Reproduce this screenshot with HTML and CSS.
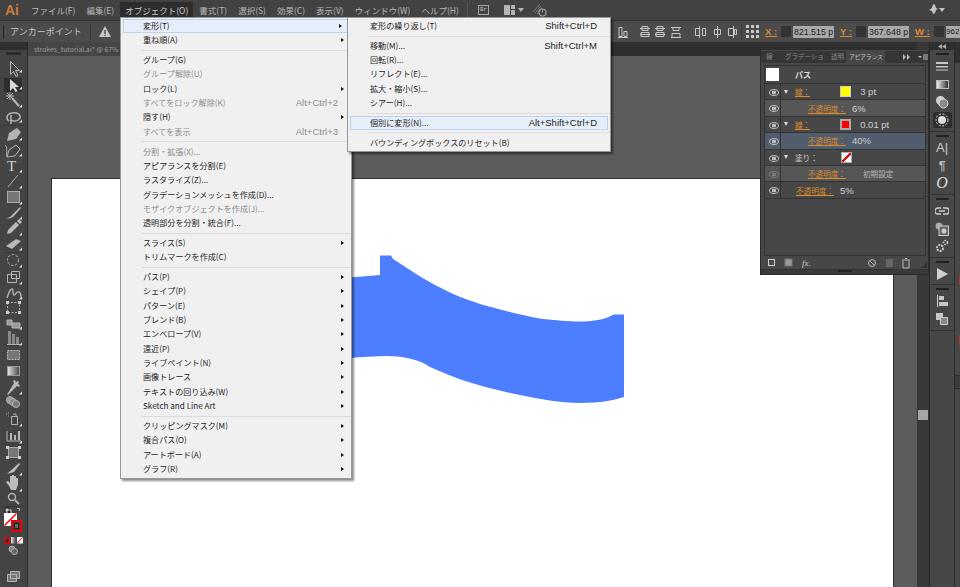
FILE: index.html
```html
<!DOCTYPE html>
<html lang="ja">
<head>
    <meta charset="UTF-8">
    <title>Illustrator</title>
    <link rel="stylesheet" href="styles.css">
</head>
<body>
<div class="app">
    <div class="menubar">
        <span class="logo">Ai</span>
        <span class="mitem">ファイル(F)</span>
        <span class="mitem">編集(E)</span>
        <span class="mitem active">オブジェクト(O)</span>
        <span class="mitem">書式(T)</span>
        <span class="mitem">選択(S)</span>
        <span class="mitem">効果(C)</span>
        <span class="mitem">表示(V)</span>
        <span class="mitem">ウィンドウ(W)</span>
        <span class="mitem">ヘルプ(H)</span>
        <span class="mb-sep"></span>
        <span class="br-icon">Br</span>
        <svg class="mb-icon" width="22" height="12" viewBox="0 0 22 12"><path d="M0 1h6v10H0zM7 1h4v4H7zM7 6h4v5H7z" fill="#b4b4b4"/><path d="M14 4h6l-3 4z" fill="#b4b4b4"/></svg>
        <svg class="mb-icon sync" width="14" height="14" viewBox="0 0 14 14"><path d="M0 9L7 1M2 10l6-7M4 11l5-6" stroke="#7a7a7a"/><circle cx="9.500" cy="9.500" r="3.500" fill="none" stroke="#a0a0a0" stroke-width="1.200"/><path d="M9.500 6.500v3" stroke="#a0a0a0"/></svg>
        <span class="mb-right">
            <svg width="16" height="12" viewBox="0 0 16 12"><path d="M4 0l2 1 1 3 2 1-2 1-1 3-2 1-1-3-3-1 3-2zM10 4h6l-3 4z" fill="#c4c4c4"/></svg>
        </span>
    </div>

    <div class="controlbar">
        <span class="grip"></span>
        <span class="cb-title">アンカーポイント</span>
        <span class="cb-sep"></span>
        <svg class="warn" width="12" height="11" viewBox="0 0 12 11"><path d="M6 0l6 11H0z" fill="#c8c8c8"/><path d="M5.400 4h1.200v4H5.400zM5.400 8.800h1.200V10H5.400z" fill="#333"/></svg>
        <span class="cb-spacer"></span>
        <svg class="align-icons" width="120" height="14" viewBox="0 0 120 14" fill="none" stroke="#c8c8c8">
            <path d="M1 2.500h3v9H1zM6 6.500h3v5H6zM0 12.500h10"/>
            <path d="M22 3.500h10M24 1.500h6v4h-6zM22 9.500h10M23 7.500h8v4h-8z"/>
            <path d="M37 3.500h10M39 1.500h6v4h-6zM37 9.500h10M38 7.500h8v4h-8z"/>
            <path d="M53 2.500h10M55 2.500h6v3h-6zM53 12.500h10M54 8.500h8v4h-8z"/>
            <path d="M81.500 1v12M77.500 3.500h4v7h-4zM84.500 3.500h3v7h-3z"/>
            <path d="M99.500 1v12M96.500 4.500h6v5h-6z"/>
            <path d="M115.500 1v12M110.500 3.500h5v7h-5zM116.500 4.500h2v5h-2z"/>
        </svg>
        <span class="cb-sep second"></span>
        <svg class="ref-point" width="13" height="13" viewBox="0 0 13 13" fill="#c8c8c8"><path d="M0 0h3v3H0zM5 0h3v3H5zM10 0h3v3h-3zM0 5h3v3H0zM5 5h3v3H5zM10 5h3v3h-3zM0 10h3v3H0zM5 10h3v3H5zM10 10h3v3h-3z"/></svg>
        <span class="coord-label">X :</span>
        <span class="spin"></span><span class="coord-val">821.515 p</span>
        <span class="coord-label">Y :</span>
        <span class="spin"></span><span class="coord-val">367.648 p</span>
        <span class="coord-label wide">W :</span>
        <span class="spin"></span><span class="coord-val last">962</span>
    </div>

    <div class="main">
        <div class="toolbar">
            <div class="tb-top"></div>
            <svg class="tools" width="27" height="537" viewBox="0 50 27 537" fill="none" stroke="#b4b4b4">
                <defs>
                    <linearGradient id="gr" x1="0" x2="1" y1="0" y2="0"><stop offset="0" stop-color="#e8e8e8"/><stop offset="1" stop-color="#444"/></linearGradient>
                </defs>
                <path d="M6 53.500h15" stroke="#222" stroke-width="2"/>
                <path d="M3 125.500h21M3 252.500h21M3 345.500h21M3 444.500h21M3 506.500h21" stroke="#393939"/>
                <!-- selection, direct selection, wand, lasso -->
                <path d="M10.500 61.500v13l3-3 2.500 5 2-1-2.500-5h4z"/>
                <rect x="4" y="78" width="18" height="14" fill="#2e2e2e" stroke="none"/>
                <path d="M10 79v12l3-3 2.500 4 2-1-2.500-4h4z" fill="#d8d8d8" stroke="none"/>
                <path d="M12 98l7 8" stroke-width="2"/>
                <path d="M6 96h8M10 92v8M7 93l6 6M13 93l-6 6" stroke-width="1"/>
                <path d="M9 121c-3-2-3-7 3-8 6-1 9 2 8 5-1 3-6 4-10 2M11 115v9" stroke-width="1.500"/>
                <!-- pen, curvature, type, line -->
                <path d="M7 141l2-8 8-5 4 4-5 7z" fill="#b4b4b4" stroke="none"/>
                <path d="M7 157l2-7 7-5 4 4-5 7zM5 145c3 2 1 8 2 12"/>
                <text x="7" y="171" class="tool-t">T</text>
                <path d="M8 187l10-12"/>
                <!-- rect, brush, pencil, eraser -->
                <rect x="7.500" y="191.500" width="12" height="11" fill="#777" stroke="#aaa"/>
                <path d="M6 218c4 0 5-2 7-4l7-7 1 1-7 8c-2 2-5 3-8 2z" fill="#b8b8b8" stroke="none"/>
                <path d="M7 234l1-4 8-8 3 3-8 8zM17 221l2-2 3 3-2 2z" fill="#bbb" stroke="none"/>
                <path d="M6 246l10-7 5 2-9 8z" fill="#b8b8b8" stroke="none"/>
                <!-- rotate, scale, warp, free transform -->
                <circle cx="13" cy="260" r="5.500" stroke-dasharray="2.500 1.500"/>
                <path d="M7.500 274.500h9v8h-9zM11.500 271.500h8v7h-8z"/>
                <path d="M7 298c2-6 3-9 5-9s0 6 2 6 2-4 5-3 1 5 3 7" stroke-width="1.400"/>
                <path d="M7.500 302.500h12v10h-12z" stroke-dasharray="2 1.500"/>
                <path d="M6 301h3v3H6zM18 301h3v3h-3zM6 311h3v3H6zM18 311h3v3h-3z" fill="#ccc" stroke="none"/>
                <!-- shape builder, perspective, mesh, gradient -->
                <path d="M7 320h5v5H7zM12 323h8v5h-8z" fill="#999"/>
                <path d="M8 331h3v13H8zM12 334h3v10h-3zM16 337h3v7h-3z" fill="#888" stroke="none"/>
                <path d="M7 344.500h13" />
                <rect x="7.500" y="350.500" width="12" height="9" fill="#777" stroke="#bbb" stroke-dasharray="2 1"/>
                <rect x="7.500" y="366.500" width="12" height="9" fill="url(#gr)" stroke="#999"/>
                <!-- eyedropper, blend, spray, graph -->
                <path d="M8 393l-1 1 1 1 1-1 8-8 2 1 1-2-2-1 1-2-1-1-2 1-1-2-2 1 1 2z" fill="#b8b8b8" stroke="none"/>
                <circle cx="10" cy="400" r="3.500" fill="#999"/><circle cx="13" cy="402" r="3.500" fill="#888"/><circle cx="16" cy="404" r="3.500" fill="#777"/>
                <path d="M11.500 416.500h6v8h-6zM13 414h3v2M8 413h1M8 416h1M6 414h1" />
                <path d="M7 431v10h14" /><path d="M10 433h2v7h-2zM14 435h2v5h-2zM18 431h2v9h-2z" fill="#b8b8b8" stroke="none"/>
                <!-- artboard, slice, hand, zoom -->
                <rect x="8.500" y="447.500" width="10" height="10" fill="#777" stroke="#aaa"/>
                <path d="M6 446h3v3H6zM18 446h3v3h-3zM6 456h3v3H6zM18 456h3v3h-3z" fill="#ccc" stroke="none"/>
                <path d="M7 474l12-11 1 1-6 8z" fill="#bbb" stroke="none"/>
                <path d="M9 486l-3-4 2-1 2 2v-7h2v5-6h2v6-5h2v6-4h2v7l-2 5h-5z" fill="#bbb" stroke="none"/>
                <circle cx="12" cy="497" r="3.500" stroke-width="1.400"/><path d="M15 500l4 4" stroke-width="2"/>
                <!-- fill, stroke, modes -->
                <path d="M22 72.500v-3l-3 3zM22 89.500v-3l-3 3zM22 107.500v-3l-3 3zM22 122.500v-3l-3 3zM22 140.500v-3l-3 3zM22 156.500v-3l-3 3zM22 172.500v-3l-3 3zM22 188.500v-3l-3 3zM22 204.500v-3l-3 3zM22 219.500v-3l-3 3zM22 235.500v-3l-3 3zM22 250.500v-3l-3 3zM22 267.500v-3l-3 3zM22 284.500v-3l-3 3zM22 299.500v-3l-3 3zM22 329.500v-3l-3 3zM22 345.500v-3l-3 3zM22 394.500v-3l-3 3zM22 426.500v-3l-3 3zM22 443.500v-3l-3 3zM22 475.500v-3l-3 3zM22 491.500v-3l-3 3z" fill="#ddd" stroke="none"/>
                <path d="M5 508h4v4H5z" fill="#ccc" stroke="#111"/><path d="M7 510h4v4H7z" fill="#222" stroke="#ddd"/>
                <path d="M17 508l3 1-1 2" stroke="#bbb"/>
                <rect x="4" y="513" width="13" height="13" fill="#fff" stroke="none"/>
                <path d="M4.500 525.500l12-12" stroke="#e00" stroke-width="1.500"/>
                <rect x="11" y="520" width="11" height="12" fill="#fff" stroke="none"/>
                <rect x="12" y="521" width="9" height="10" fill="#3d3d3d" stroke="#e00" stroke-width="2"/>
                <rect x="14.500" y="523.500" width="4" height="5" fill="#666" stroke="#222"/>
                <rect x="5" y="538" width="4.500" height="5" fill="#333" stroke="#e00" stroke-width="1.400"/>
                <rect x="11" y="537" width="5" height="6.500" fill="url(#gr)" stroke="none"/>
                <rect x="17" y="537" width="6" height="6.500" fill="#fff" stroke="none"/>
                <path d="M17.500 543l5-5.500" stroke="#e00"/>
                <circle cx="12" cy="549" r="3" fill="#888"/><circle cx="14.500" cy="551.500" r="3" fill="#666"/>
                <path d="M7.500 574.500h9v7h-9zM10.500 571.500h9v7h-9z" fill="#777"/>
            </svg>
        </div>
        <div class="workspace">
            <div class="tabbar"><span class="doctab">strokes_tutorial.ai* @ 67%</span></div>
            <div class="canvas">
                <div class="artboard">
                    <svg class="shape" width="280" height="160" viewBox="350 250 280 160">
                        <path d="M350 277.500L380 275V255.500H391L393 259C410 270 425 280 437 286C452 294 465 299 480 304C505 311 525 316 540 318.500C555 320.500 570 321.500 580 321.500C590 321.500 600 320 606 318C610 316.500 612 315 614 314.500H624V397C615 400 600 403 580 403C560 403 540 399 520 395C500 391 480 386 462 380C450 376 440 371 430 367C420 360 405 356 387 356C375 356 362 357 350 358Z" fill="#4d7eff"/>
                    </svg>
                </div>
            </div>
        </div>
        <div class="scrollbar"><span class="thumb-v"></span></div>
        <div class="dock">
            <div class="dock-top"><svg width="8" height="5" viewBox="0 0 8 5"><path d="M4 0v5L0 2.500zM8 0v5L4 2.500z" fill="#aaa"/></svg></div>
            <div class="dock-group g1">
                <span class="dock-grip"></span>
                <span class="cell"><svg width="14" height="11" viewBox="0 0 14 11"><path d="M1 1h12v2H1zM1 5h12v1.500H1zM1 8.500h12v1H1z" fill="#c8c8c8"/></svg></span>
                <span class="cell"><span class="dock-grad"></span></span>
                <span class="cell"><svg width="14" height="14" viewBox="0 0 14 14"><circle cx="5.500" cy="5.500" r="4.500" fill="#d0d0d0"/><circle cx="8.500" cy="8.500" r="4.500" fill="#8a8a8a" stroke="#ddd"/></svg></span>
                <span class="cell"><span class="dock-sel"><svg width="14" height="14" viewBox="0 0 14 14"><circle cx="7" cy="7" r="4" fill="#ddd"/><circle cx="7" cy="7" r="6" fill="none" stroke="#ddd" stroke-dasharray="2 1.500"/></svg></span></span>
            </div>
            <div class="dock-group g2">
                <span class="dock-grip"></span>
                <span class="cell dock-a">A|</span>
                <span class="cell dock-p">¶</span>
                <span class="cell dock-o">O</span>
            </div>
            <div class="dock-group g2">
                <span class="dock-grip"></span>
                <span class="cell"><svg width="14" height="8" viewBox="0 0 14 8"><path d="M6 1H3a3 3 0 0 0 0 6h3M8 1h3a3 3 0 0 1 0 6H8M4 4h6" fill="none" stroke="#d0d0d0" stroke-width="1.300"/></svg></span>
                <span class="cell"><svg width="14" height="14" viewBox="0 0 14 14"><circle cx="4" cy="4" r="3.500" fill="#aaa"/><rect x="4" y="4" width="9.500" height="9.500" fill="#666" stroke="#ccc"/><circle cx="9" cy="9" r="2.500" fill="#ccc"/></svg></span>
                <span class="cell"><svg width="14" height="14" viewBox="0 0 14 14"><circle cx="5" cy="9" r="3" fill="none" stroke="#c8c8c8" stroke-width="2" stroke-dasharray="2 1"/><circle cx="10.500" cy="3.500" r="2" fill="none" stroke="#c8c8c8" stroke-width="1.500" stroke-dasharray="1.500 1"/></svg></span>
            </div>
            <div class="dock-group g4">
                <span class="dock-grip"></span>
                <span class="cell"><svg width="12" height="12" viewBox="0 0 12 12"><path d="M1 0l11 6-11 6z" fill="#d0d0d0"/></svg></span>
            </div>
            <div class="dock-group g5">
                <span class="dock-grip"></span>
                <span class="cell"><svg width="11" height="12" viewBox="0 0 11 12"><path d="M.5 0v12" stroke="#ccc"/><path d="M2 1h5v4H2zM2 7h9v4H2z" fill="#c8c8c8"/></svg></span>
                <span class="cell"><svg width="12" height="12" viewBox="0 0 12 12"><path d="M0 0h7v7H0z" fill="#c8c8c8"/><path d="M4.500 4.500h7v7h-7z" fill="#888" stroke="#ccc"/></svg></span>
            </div>
        </div>
        <div class="dock2">
            <span class="d2-a"></span><span class="d2-b"></span><span class="d2-b second"></span><span class="d2-sep"></span>
        </div>
    </div>

    <div class="menu obj-menu">
        <div class="row hl sub"><span>変形(T)</span></div>
        <div class="row sub"><span>重ね順(A)</span></div>
        <hr>
        <div class="row"><span>グループ(G)</span></div>
        <div class="row off"><span>グループ解除(U)</span></div>
        <div class="row sub"><span>ロック(L)</span></div>
        <div class="row off"><span>すべてをロック解除(K)</span><em>Alt+Ctrl+2</em></div>
        <div class="row sub"><span>隠す(H)</span></div>
        <div class="row off"><span>すべてを表示</span><em>Alt+Ctrl+3</em></div>
        <hr>
        <div class="row off"><span>分割・拡張(X)...</span></div>
        <div class="row"><span>アピアランスを分割(E)</span></div>
        <div class="row"><span>ラスタライズ(Z)...</span></div>
        <div class="row"><span>グラデーションメッシュを作成(D)...</span></div>
        <div class="row off"><span>モザイクオブジェクトを作成(J)...</span></div>
        <div class="row"><span>透明部分を分割・統合(F)...</span></div>
        <hr>
        <div class="row sub"><span>スライス(S)</span></div>
        <div class="row"><span>トリムマークを作成(C)</span></div>
        <hr>
        <div class="row sub"><span>パス(P)</span></div>
        <div class="row sub"><span>シェイプ(P)</span></div>
        <div class="row sub"><span>パターン(E)</span></div>
        <div class="row sub"><span>ブレンド(B)</span></div>
        <div class="row sub"><span>エンベロープ(V)</span></div>
        <div class="row sub"><span>遠近(P)</span></div>
        <div class="row sub"><span>ライブペイント(N)</span></div>
        <div class="row sub"><span>画像トレース</span></div>
        <div class="row sub"><span>テキストの回り込み(W)</span></div>
        <div class="row sub"><span>Sketch and Line Art</span></div>
        <hr>
        <div class="row sub"><span>クリッピングマスク(M)</span></div>
        <div class="row sub"><span>複合パス(O)</span></div>
        <div class="row sub"><span>アートボード(A)</span></div>
        <div class="row sub"><span>グラフ(R)</span></div>
    </div>

    <div class="menu trans-menu">
        <div class="row"><span>変形の繰り返し(T)</span><em>Shift+Ctrl+D</em></div>
        <hr>
        <div class="row"><span>移動(M)...</span><em>Shift+Ctrl+M</em></div>
        <div class="row"><span>回転(R)...</span></div>
        <div class="row"><span>リフレクト(E)...</span></div>
        <div class="row"><span>拡大・縮小(S)...</span></div>
        <div class="row"><span>シアー(H)...</span></div>
        <hr>
        <div class="row hl"><span>個別に変形(N)...</span><em>Alt+Shift+Ctrl+D</em></div>
        <hr>
        <div class="row"><span>バウンディングボックスのリセット(B)</span></div>
    </div>

    <div class="panel">
        <div class="ptabs">
            <span class="ptab t1">線</span>
            <span class="ptab t2">グラデーショ</span>
            <span class="ptab t3">透明</span>
            <span class="ptab on">アピアランス</span>
            <svg class="pmenu" width="27" height="8" viewBox="0 0 27 8"><path d="M1 1v6l3-3zM5 1v6l3-3z" fill="#bbb"/><path d="M12.500 0v8" stroke="#333"/><path d="M16 3h4l-2 2z" fill="#bbb"/><path d="M21 1h5v6h-5z" fill="#777"/></svg>
        </div>
        <div class="pbody">
            <div class="phead"><span class="thumb"></span><b>パス</b></div>
            <div class="prow"><span class="eye"></span><span class="tri"></span><u>線：</u><span class="swatch yellow"></span><span class="val">3 pt</span></div>
            <div class="prow lite"><span class="eye"></span><u class="ind">不透明度：</u><span class="val">6%</span></div>
            <div class="prow"><span class="eye"></span><span class="tri"></span><u>線：</u><span class="swatch red"></span><span class="val">0.01 pt</span></div>
            <div class="prow sel"><span class="eye"></span><u class="ind">不透明度：</u><span class="val">40%</span></div>
            <div class="prow"><span class="eye"></span><span class="tri"></span><span class="nu">塗り：</span><span class="swatch none"></span></div>
            <div class="prow lite"><span class="eye dim"></span><u class="ind deep">不透明度：</u><span class="val2">初期設定</span></div>
            <div class="prow"><span class="eye"></span><u class="ind top">不透明度：</u><span class="val">5%</span></div>
            <div class="pempty"></div>
        </div>
        <div class="pfoot">
            <svg width="40" height="12" viewBox="0 0 40 12" fill="none" stroke="#d0d0d0">
                <rect x="7.500" y="2.500" width="6" height="6"/>
                <rect x="24" y="2" width="7" height="7" fill="#999" stroke="#777"/>
            </svg>
            <span class="fx">fx.</span>
            <svg class="foot-r" width="60" height="12" viewBox="0 0 60 12" fill="none" stroke="#b8b8b8">
                <circle cx="4" cy="6" r="3.500"/><path d="M1.500 3.500l5 5"/>
                <path d="M18 2h7v8h-7z" fill="#666" stroke="none"/>
                <path d="M34 3h8M35 4v7h6V4M37 1.500h2" />
                <path d="M59 5v6h-6z" fill="#333" stroke="none"/>
            </svg>
        </div>
        <div class="pgrip"><span></span></div>
    </div>
</div>
</body>
</html>
```

FILE: styles.css
```css
* { box-sizing: border-box; }
html, body { margin: 0; height: 100%; overflow: hidden; }
body {
    font-family: "Noto Sans CJK JP", "Liberation Sans", sans-serif;
    font-size: 9px;
    background: #3a3a3a;
    color: #ccc;
}
.app { position: relative; width: 960px; height: 587px; overflow: hidden; display: flex; flex-direction: column; }

/* menu bar */
.menubar { height: 20px; background: #424242; display: flex; align-items: center; padding-left: 5px; flex: none; }
.logo { color: #d07a3a; font: bold 14px "Liberation Sans", sans-serif; width: 21px; flex: none; }
.mitem { padding: 0 5px; height: 16px; line-height: 16px; margin-right: 1px; color: #b8b8b8; font-size: 8.500px; white-space: nowrap; flex: none; }
.mitem.active { background: #2d2d2d; color: #ccc; }
.mb-sep { width: 1px; height: 14px; background: #555; margin: 0 10px 0 2px; flex: none; }
.br-icon { border: 1px solid #a8a8a8; font: 6px/8px "Liberation Mono", monospace; padding: 0 1px; color: #bbb; margin-right: 15px; flex: none; }
.mb-icon { flex: none; }
.mb-icon.sync { margin-left: 7px; }
.mb-right { margin-left: auto; margin-right: 15px; display: flex; }

/* control bar */
.controlbar { height: 22px; background: #4b4b4b; border-top: 1px solid #333; display: flex; align-items: center; padding-left: 3px; white-space: nowrap; flex: none; }
.controlbar > * { flex: none; }
.grip { width: 1px; height: 14px; background: #222; margin-right: 6px; }
.cb-title { width: 80px; color: #c8c8c8; }
.cb-sep { width: 1px; height: 16px; background: #3a3a3a; margin-right: 8px; }
.cb-sep.second { margin: 0 4px 0 3px; }
.cb-spacer { width: 507px; }
.ref-point { margin-right: 6px; }
.coord-label { color: #d98a2b; text-decoration: underline; font: bold 9.500px "Liberation Sans", sans-serif; width: 11px; margin-right: 5px; }
.coord-label.wide { width: 13px; margin-right: 6px; }
.spin { width: 10px; height: 11px; background: #333; margin-right: 2px; }
.coord-val { background: #a8a8a8; color: #222; font: 8.800px/12px "Liberation Sans", sans-serif; width: 41px; height: 12px; overflow: hidden; margin-right: 6px; padding-left: 1px; }
.coord-val.last { margin-right: 0; width: 14px; padding-left: 0; font-size: 8px; }

/* main area */
.main { flex: 1; display: flex; min-height: 0; }
.toolbar { width: 28px; background: #444; border-right: 1px solid #2a2a2a; flex: none; }
.tb-top { height: 8px; background: #2f2f2f; }
.tools { display: block; }
.tool-t { font: 15px "Liberation Serif", serif; fill: #ccc; stroke: none; }
.workspace { width: 889px; display: flex; flex-direction: column; flex: none; }
.tabbar { height: 14px; background: #2f2f2f; flex: none; }
.doctab { display: block; width: 92px; height: 14px; padding-left: 6px; background: #454545; color: #9d9d9d; line-height: 14px; font-size: 6.800px; white-space: nowrap; overflow: hidden; }
.canvas { flex: 1; background: #5c5c5c; padding: 123px 0 0 24px; min-height: 0; }
.artboard { background: #fff; width: 841px; height: 420px; position: relative; outline: 1px solid #2e2e2e; }
.shape { position: absolute; left: 298px; top: 71px; }
.scrollbar { width: 13px; background: #383838; padding: 368px 0 0 1px; flex: none; border-right: 1px solid #2a2a2a; }
.thumb-v { display: block; width: 10px; height: 10px; background: #a6a6a6; }

/* icon docks */
.dock { width: 25px; background: #474747; flex: none; border-right: 1px solid #2a2a2a; display: flex; flex-direction: column; }
.dock-top { height: 8px; background: #2f2f2f; display: flex; align-items: center; justify-content: center; }
.dock-top svg { display: block; }
.dock-group { display: flex; flex-direction: column; align-items: center; padding: 3px 0 2px; border-bottom: 1px solid #333; flex: none; }
.g1 { height: 82px; }
.g2 { height: 63px; }
.g4 { height: 27px; }
.g5 { height: 46px; }
.dock-grip { width: 13px; height: 2px; background: #222; margin-bottom: 2px; flex: none; }
.cell { flex: 1; display: flex; align-items: center; justify-content: center; min-height: 0; }
.dock-grad { width: 13px; height: 9px; background: linear-gradient(to right, #eee, #333); border: 1px solid #bbb; }
.dock-sel { width: 19px; height: 16px; background: #2d2d2d; display: flex; align-items: center; justify-content: center; border-radius: 2px; }
.dock-a { font: 13px "Liberation Sans", sans-serif; color: #ccc; }
.dock-p { font: bold 12px "Liberation Sans", sans-serif; color: #bbb; }
.dock-o { font: italic 16px "Liberation Serif", serif; color: #ddd; }
.dock2 { flex: 1; background: #474747; display: flex; flex-direction: column; }
.d2-a { height: 21px; background: #2f2f2f; flex: none; }
.d2-b { width: 5px; height: 10px; margin: 212px 0 0 4px; background: #b03030; flex: none; }
.d2-b.second { margin-top: 50px; }
.d2-sep { height: 14px; margin-top: 30px; background: #3c3c3c; border-top: 1px solid #2a2a2a; border-bottom: 1px solid #2a2a2a; flex: none; }

/* menus */
.menu { position: absolute; background: #f0f0f0; border: 1px solid #979797; box-shadow: 2px 2px 2px rgba(0,0,0,.45); color: #1e1e1e; font-size: 8.100px; padding-top: 1px; }
.menu .row { height: 14.350px; line-height: 14.350px; display: flex; justify-content: space-between; white-space: nowrap; padding: 0 13px 0 22px; position: relative; }
.menu .row em { font: 9.500px/14.350px "Liberation Sans", sans-serif; color: inherit; }
.menu .off { color: #8c8c8c; }
.menu .sub::after { content: ""; position: absolute; right: 7px; top: 5px; border-left: 3px solid #111; border-top: 2.500px solid transparent; border-bottom: 2.500px solid transparent; }
.menu .hl { background: #e6eef9; outline: 1px solid #bcd3ee; outline-offset: -1px; margin: 0 2px; padding-left: 20px; padding-right: 11px; }
.menu hr { border: 0; border-top: 1px solid #dcdcdc; margin: 2.200px 0 2.200px 20px; height: 0; }
.obj-menu { left: 120px; top: 17px; width: 232px; height: 462px; }
.trans-menu { left: 347px; top: 17px; width: 264px; height: 135px; }

/* appearance panel */
.panel { position: absolute; left: 760px; top: 50px; width: 169px; height: 225px; background: #474747; border: 1px solid #2c2c2c; border-top: 0; display: flex; flex-direction: column; }
.ptabs { height: 12px; margin-top: 1px; background: #363636; display: flex; align-items: stretch; font-size: 6.500px; color: #8a8a8a; line-height: 11px; white-space: nowrap; flex: none; }
.ptab { overflow: hidden; flex: none; }
.t1 { width: 22px; padding-left: 5px; }
.t2 { width: 45px; padding-left: 2px; }
.t3 { width: 18px; padding-left: 3px; }
.ptab.on { width: 39px; padding-left: 3px; background: #474747; color: #ccc; font-size: 5.700px; }
.pmenu { margin: 2px 0 0 17px; flex: none; }
.pbody { flex: 1; margin: 2px 2px 0 3px; border: 1px solid #333; display: flex; flex-direction: column; font-size: 7.600px; min-height: 0; }
.phead { height: 17px; display: flex; align-items: center; padding-left: 1px; flex: none; }
.phead b { margin-left: 16px; color: #ddd; font-size: 8px; }
.thumb { width: 13px; height: 13px; background: #fff; flex: none; }
.prow { height: 16.400px; display: flex; align-items: center; border-top: 1px solid #333; color: #c8c8c8; white-space: nowrap; flex: none; }
.prow.lite { background: #565656; }
.prow.sel { background: #515c6c; }
.prow u { color: #d98a2b; text-underline-offset: 1px; }
.val { font: 9.500px "Liberation Sans", sans-serif; color: #d0d0d0; }
.ind { margin-left: 27px; margin-right: 6px; }
.ind.deep { margin-right: 17px; }
.ind.top { margin-left: 15px; }
.eye { width: 16px; height: 100%; border-right: 1px solid #333; position: relative; flex: none; }
.eye::before { content: ""; position: absolute; left: 4px; top: 5px; width: 8px; height: 5px; border: 1px solid #bbb; border-radius: 50%; background: radial-gradient(circle, #bbb 40%, transparent 45%); }
.eye.dim::before { opacity: .35; }
.tri { border-top: 4px solid #ddd; border-left: 2.500px solid transparent; border-right: 2.500px solid transparent; margin: 0 7px 0 3px; flex: none; }
.swatch { width: 11px; height: 11px; margin-left: 30px; margin-right: 9px; flex: none; }
.yellow { background: #ff0; border: 1px solid #ccc; }
.red { background: #f00; border: 2px solid #aaa; }
.none { background: linear-gradient(to top left, #fff 42%, #e00 42%, #e00 58%, #fff 58%); border: 1px solid #aaa; margin-left: 23px; }
.val2 { color: #b8b8b8; }
.pempty { flex: 1; border-top: 1px solid #333; }
.pfoot { height: 13px; display: flex; align-items: center; flex: none; }
.pfoot > svg { flex: none; }
.fx { font: italic 9px "Liberation Serif", serif; color: #ccc; margin-left: 1px; }
.foot-r { margin-left: auto; margin-right: 0; }
.pgrip { height: 5px; background: #3a3a3a; border-top: 1px solid #333; flex: none; display: flex; justify-content: center; }
.pgrip span { width: 14px; height: 2px; background: #222; }
```
